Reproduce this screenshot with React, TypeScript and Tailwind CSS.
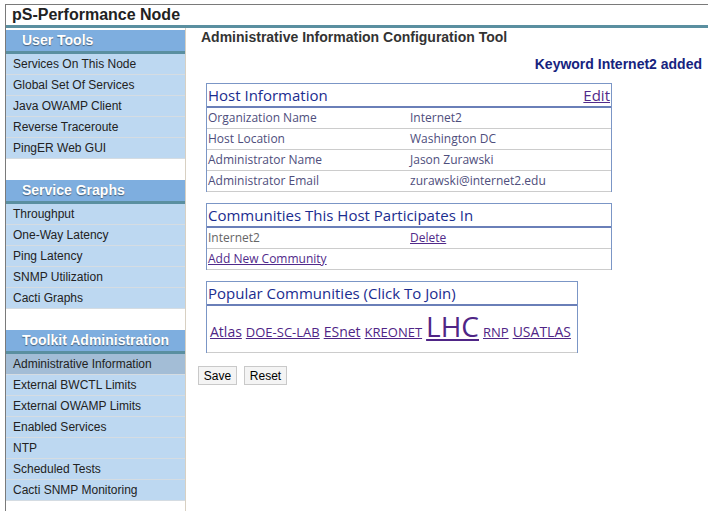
import React from 'react';

const sans = "font-['Liberation_Sans',Arial,sans-serif]";
const lucida = "font-['Open_Sans','Noto_Sans',sans-serif]";

const groups = [
  {
    title: 'User Tools',
    items: ['Services On This Node', 'Global Set Of Services', 'Java OWAMP Client', 'Reverse Traceroute', 'PingER Web GUI'],
  },
  {
    title: 'Service Graphs',
    items: ['Throughput', 'One-Way Latency', 'Ping Latency', 'SNMP Utilization', 'Cacti Graphs'],
  },
  {
    title: 'Toolkit Administration',
    items: [
      'Administrative Information',
      'External BWCTL Limits',
      'External OWAMP Limits',
      'Enabled Services',
      'NTP',
      'Scheduled Tests',
      'Cacti SNMP Monitoring',
    ],
  },
];

const hostRows = [
  ['Organization Name', 'Internet2'],
  ['Host Location', 'Washington DC'],
  ['Administrator Name', 'Jason Zurawski'],
  ['Administrator Email', 'zurawski@internet2.edu'],
];

const popular = [
  { name: 'Atlas', size: 'text-[14px]' },
  { name: 'DOE-SC-LAB', size: 'text-[13px]' },
  { name: 'ESnet', size: 'text-[14px]' },
  { name: 'KREONET', size: 'text-[13px]' },
  { name: 'LHC', size: 'text-[28px] leading-[28px] font-medium' },
  { name: 'RNP', size: 'text-[13px]' },
  { name: 'USATLAS', size: 'text-[14px]' },
];

function SideGroup({ title, items, first }: { title: string; items: string[]; first?: boolean }) {
  return (
    <div className={first ? '' : 'mt-[21px]'}>
      <div className="h-[24px] bg-[#7eaedf] border-b-[3px] border-[#5a8fa0] pl-[16px] flex items-center text-white font-bold text-[14px] [text-shadow:0_1px_1px_rgba(0,0,0,0.45)]">
        {title}
      </div>
      {items.map((item) => (
        <div
          key={item}
          className={`h-[21px] border-b border-[#d5dce2] pl-[7px] flex items-center text-[12px] text-[#222] ${
            item === 'Administrative Information' ? 'bg-[#a3bdd6]' : 'bg-[#bdd8f1]'
          }`}
        >
          {item}
        </div>
      ))}
    </div>
  );
}

function BoxHeader({ children }: { children: React.ReactNode }) {
  return (
    <div className="h-[24px] border-b-2 border-[#6a7fb8] px-[1px] flex items-center justify-between text-[15px] text-[#1b2d8f]">
      {children}
    </div>
  );
}

export default function App() {
  return (
    <div className={`w-[708px] h-[511px] bg-white overflow-hidden pt-[4px] pl-[5px] ${sans}`}>
      <div className="h-full border-l border-t border-[#7a7a7a] flex flex-col">
        <div className="h-[20px] pl-[6px] flex items-center font-bold text-[16px] text-[#222]">pS-Performance Node</div>
        <div className="h-[3px] bg-[#5a8fa0]" />

        <div className="flex flex-1">
          {/* sidebar */}
          <div className="w-[180px] border-r border-[#d8d0c2] pt-[2px]">
            {groups.map((g, i) => (
              <SideGroup key={g.title} title={g.title} items={g.items} first={i === 0} />
            ))}
          </div>

          {/* main */}
          <div className="flex-1 pt-[1px]">
            <div className="pl-[15px] font-bold text-[14px] leading-[17px] text-[#333]">
              Administrative Information Configuration Tool
            </div>
            <div className="mt-[10px] pr-[6px] text-right font-bold text-[14px] leading-[17px] text-[#16237e]">
              Keyword Internet2 added
            </div>

            <div className={`ml-[20px] ${lucida}`}>
              {/* host information */}
              <div className="mt-[10px] w-[406px] border-x border-t border-[#7b96c6]">
                <BoxHeader>
                  <span>Host Information</span>
                  <a className="text-[#512a8a] underline">Edit</a>
                </BoxHeader>
                {hostRows.map(([k, v]) => (
                  <div key={k} className="h-[21px] border-b border-[#cccccc] px-[1px] flex items-center text-[12px] text-[#4e4e7c]">
                    <span className="w-[202px]">{k}</span>
                    <span>{v}</span>
                  </div>
                ))}
              </div>

              {/* communities */}
              <div className="mt-[11px] w-[406px] border-x border-t border-[#7b96c6]">
                <BoxHeader>
                  <span>Communities This Host Participates In</span>
                </BoxHeader>
                <div className="h-[21px] border-b border-[#cccccc] px-[1px] flex items-center text-[12px]">
                  <span className="w-[202px] text-[#666]">Internet2</span>
                  <a className="text-[#512a8a] underline">Delete</a>
                </div>
                <div className="h-[21px] border-b border-[#cccccc] px-[1px] flex items-center text-[12px]">
                  <a className="text-[#512a8a] underline">Add New Community</a>
                </div>
              </div>

              {/* popular */}
              <div className="mt-[11px] w-[372px] border-x border-t border-[#7b96c6]">
                <BoxHeader>
                  <span>Popular Communities (Click To Join)</span>
                </BoxHeader>
                <div className="h-[47px] border-b border-[#cccccc] pl-[3px] pt-[6px] flex items-baseline gap-[4px] whitespace-nowrap">
                  {popular.map((p) => (
                    <a key={p.name} className={`shrink-0 text-[#4f2586] underline ${p.size}`}>
                      {p.name}
                    </a>
                  ))}
                </div>
              </div>
            </div>

            <div className="mt-[13px] ml-[12px] flex gap-[7px]">
              <button className="h-[19px] w-[39px] bg-[#f4f4f4] border border-[#c9c9c9] text-[12px] text-black">Save</button>
              <button className="h-[19px] w-[43px] bg-[#f4f4f4] border border-[#c9c9c9] text-[12px] text-black">Reset</button>
            </div>
          </div>
        </div>
      </div>
    </div>
  );
}
